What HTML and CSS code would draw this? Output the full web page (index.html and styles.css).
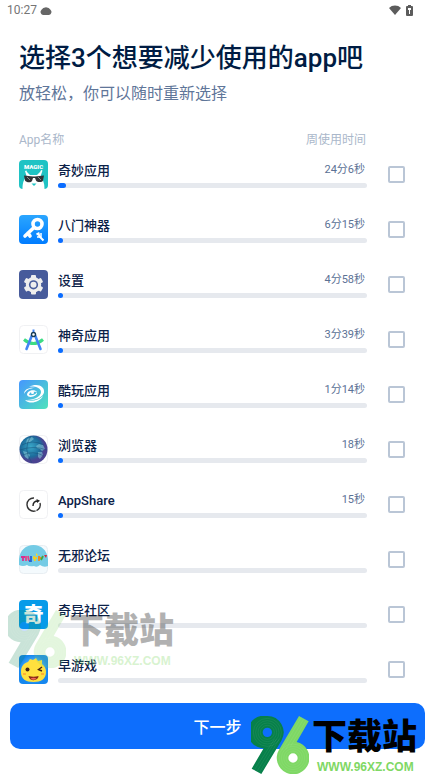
FILE: index.html
```html
<!DOCTYPE html>
<html lang="zh-CN">
<head>
<meta charset="utf-8">
<meta name="viewport" content="width=device-width, initial-scale=1">
<title>选择app</title>
<link rel="stylesheet" href="styles.css">
</head>
<body>
<svg class="defs" aria-hidden="true">
  <defs>
    <linearGradient id="blue" x1="0" y1="0" x2="0" y2="1"><stop offset="0" stop-color="#2ba6ff"/><stop offset="1" stop-color="#007cff"/></linearGradient>
    <linearGradient id="teal" x1="0" y1="0" x2="1" y2="1"><stop offset="0" stop-color="#4596ff"/><stop offset="1" stop-color="#4fe3bc"/></linearGradient>
    <radialGradient id="globe" cx=".4" cy=".4"><stop offset="0" stop-color="#3aa7c8"/><stop offset=".7" stop-color="#1c6d9c"/><stop offset="1" stop-color="#4a4391"/></radialGradient>
    <radialGradient id="sun"><stop offset="0" stop-color="#8fe0ff"/><stop offset="1" stop-color="#1687ee"/></radialGradient>
    <symbol id="logo96" viewBox="0 0 174 174">
      <circle cx="49" cy="49" r="18" fill="#0d6efd"/>
      <circle cx="126" cy="126" r="18" fill="#fff"/>
      <path fill="#07804a" fill-rule="evenodd" d="M49 0a49 49 0 0 1 42 74L31 174 2 158 38 97A49 49 0 1 1 49 0zM49 35a14 14 0 1 0 0 28 14 14 0 0 0 0-28z"/>
      <path fill="#7fd865" fill-rule="evenodd" d="M144 0l29 16-36 62a49 49 0 1 1-53 23zM126 112a14 14 0 1 0 0 28 14 14 0 0 0 0-28z"/>
      <g fill="none" stroke="#fff" stroke-opacity=".12" stroke-width="1.500">
        <circle cx="49" cy="49" r="21"/><circle cx="49" cy="49" r="28"/><circle cx="49" cy="49" r="35"/><circle cx="49" cy="49" r="42"/>
        <circle cx="126" cy="126" r="21"/><circle cx="126" cy="126" r="28"/><circle cx="126" cy="126" r="35"/><circle cx="126" cy="126" r="42"/>
        <path d="M84 70L25 170M77 68L18 166M70 70L10 162M151 5L92 102M158 9L104 100M165 13L118 92"/>
      </g>
    </symbol>
  </defs>
</svg>

<header class="status">
  <time>10:27</time>
  <svg class="cloud" viewBox="0 0 12 9"><path fill="#666" d="M3 9a3 3 0 0 1-1.500-5.200A5 4.500 0 0 1 10.500 3.800 3 3 0 0 1 9 9z"/></svg>
  <svg class="wifi" viewBox="0 0 12 10"><path fill="#5c5c5c" d="M0 3a8.500 8.500 0 0 1 12 0L6 10z"/></svg>
  <svg class="battery" viewBox="0 0 7 11"><path fill="#5c5c5c" d="M2 0h3v1h1a1 1 0 0 1 1 1v8a1 1 0 0 1-1 1H1a1 1 0 0 1-1-1V2a1 1 0 0 1 1-1h1z"/><path fill="#fff" d="M2 3h3v2H4v4H3V5H2z"/></svg>
</header>

<main class="page">
  <h1>选择3个想要减少使用的app吧</h1>
  <p class="sub">放轻松，你可以随时重新选择</p>
  <div class="heads"><span>App名称</span><span>周使用时间</span></div>

  <ul class="apps">
    <li><label class="app">
      <svg class="icon" viewBox="0 0 29 29"><rect width="29" height="29" rx="4" fill="#1fc3c4"/><text x="14.500" y="9" class="magic">MAGIC</text><path fill="#fff" d="M3.500 29c0-7 2-11 4.500-13V12l3 3h7l4-4-1 5c3 3 4.500 7 4.500 13z"/><path fill="#fff" d="M6 11l1.500-.5L9 16H7.500zM22 10l1.500.5-2 6H20z"/><path fill="#303237" d="M5 15.500l9 1h2l9-1-1 5c-.5 2-6 2-7 0l-1-2.500h-2L13 21c-1 2-6 1.500-7-.5z"/><path stroke="#888" d="M8 17l3 3M19 17l3 3"/><path fill="#1fc3c4" d="M12.500 23.500h5L15 26z"/></svg>
      <span class="info"><span class="name">奇妙应用</span><span class="time">24分6秒</span><span class="bar"><span class="fill" style="width:8px"></span></span></span>
      <input type="checkbox"></label></li>
    <li><label class="app">
      <svg class="icon" viewBox="0 0 29 29"><rect width="29" height="29" rx="4" fill="url(#blue)"/><circle cx="18.500" cy="9" r="4.500" fill="none" stroke="#fff" stroke-width="3.600"/><path d="M15 12.500L6 21M9 18l2 3" stroke="#fff" stroke-width="3.600" stroke-linecap="round"/><path d="M17.500 19.500l2-1 1 3 4 4" fill="none" stroke="#fff" stroke-width="2"/><path d="M22 18v4h-4" fill="none" stroke="#fff" stroke-width="1.500"/></svg>
      <span class="info"><span class="name">八门神器</span><span class="time">6分15秒</span><span class="bar"><span class="fill" style="width:5px"></span></span></span>
      <input type="checkbox"></label></li>
    <li><label class="app">
      <svg class="icon" viewBox="0 0 29 29"><rect width="29" height="29" rx="4" fill="#475b9b"/><g fill="#eee"><circle cx="14.500" cy="14.800" r="7.700"/><rect x="12" y="5" width="5" height="19.600" rx="1"/><rect x="12" y="5" width="5" height="19.600" rx="1" transform="rotate(60 14.500 14.800)"/><rect x="12" y="5" width="5" height="19.600" rx="1" transform="rotate(120 14.500 14.800)"/></g><circle cx="14.500" cy="14.800" r="4.600" fill="#475b9b"/><circle cx="14.500" cy="14.800" r="3" fill="#eee"/></svg>
      <span class="info"><span class="name">设置</span><span class="time">4分58秒</span><span class="bar"><span class="fill" style="width:5px"></span></span></span>
      <input type="checkbox"></label></li>
    <li><label class="app">
      <svg class="icon" viewBox="0 0 29 29"><rect x=".5" y=".5" width="28" height="28" rx="4" fill="#fff" stroke="#f0f1f3"/><path d="M5 14.500q9.500 8 19 0" fill="none" stroke="#3ddc84" stroke-width="3"/><path d="M13.500 9L7.500 24M15.500 9l6 15" stroke="#4285f4" stroke-width="2.600" stroke-linecap="round"/><path d="M14.500 4.500v4" stroke="#4285f4" stroke-width="2"/><circle cx="14.500" cy="9.500" r="2" fill="#fff" stroke="#163b58" stroke-width="1.400"/></svg>
      <span class="info"><span class="name">神奇应用</span><span class="time">3分39秒</span><span class="bar"><span class="fill" style="width:5px"></span></span></span>
      <input type="checkbox"></label></li>
    <li><label class="app">
      <svg class="icon" viewBox="0 0 29 29"><rect width="29" height="29" rx="4" fill="url(#teal)"/><g fill="#fff"><path d="M10 6.500c9-4 16 0 15 6-1 5-9 8.500-17 7.500 8 0 14-4 14-8 0-4-5-6-12-5.500z"/><path d="M6 20c7 2 14 0 18-4-3 6-13 9-18 4z"/><path d="M5 14c0-5 6-7 11-6-5 0-9 2-11 6z"/><path d="M8 15c0-5 8-6 10-3-4-1-8 0-8 3 4 1 7-1 8-3 1 4-8 7-10 3z"/><circle cx="13.500" cy="12.500" r="1.500"/></g></svg>
      <span class="info"><span class="name">酷玩应用</span><span class="time">1分14秒</span><span class="bar"><span class="fill" style="width:5px"></span></span></span>
      <input type="checkbox"></label></li>
    <li><label class="app">
      <svg class="icon" viewBox="0 0 29 29"><rect x=".5" y=".5" width="28" height="28" rx="4" fill="#fff" stroke="#f0f1f3"/><circle cx="14.500" cy="14.500" r="14" fill="url(#globe)"/><g fill="#8fd0dc" fill-opacity=".55"><path d="M17 11l3-2 4 1 2 4-3 2-2-2-3-1zM19 17l4 0 1 3-3 4-2-2zM4 16l4 1 3 3-2 4-3-2zM8 4l5-2 2 2-4 3-4 1z"/></g><path d="M3 10q10-6 22 0M1 15q13-5 27 0M4 20q10-5 21 1M12 1q-9 13 1 27" fill="none" stroke="#174f78" stroke-opacity=".5"/></svg>
      <span class="info"><span class="name">浏览器</span><span class="time">18秒</span><span class="bar"><span class="fill" style="width:5px"></span></span></span>
      <input type="checkbox"></label></li>
    <li><label class="app">
      <svg class="icon" viewBox="0 0 29 29"><rect x=".5" y=".5" width="28" height="28" rx="4" fill="#fff" stroke="#f0f1f3"/><path d="M15 8a6.600 6.600 0 1 0 6 5" fill="none" stroke="#333" stroke-width="1.400" stroke-dasharray="23 1 20"/><path d="M14 16c0-3 1-5 5-5" fill="none" stroke="#222" stroke-width="1.400"/><path d="M17.500 9l3.500 1.700-3 2.300z" fill="#222"/></svg>
      <span class="info"><span class="name">AppShare</span><span class="time">15秒</span><span class="bar"><span class="fill" style="width:5px"></span></span></span>
      <input type="checkbox"></label></li>
    <li><label class="app">
      <svg class="icon" viewBox="0 0 29 29"><rect x=".5" y=".5" width="28" height="28" rx="4" fill="#f4fafd" stroke="#e8eef2"/><path d="M0 14C1 5 7 0 14.500 0S28 5 29 14v7q-4 2-8-1-3 3-6 1-5 1-7-1-4 2-8 0z" fill="#74cbe5"/><g stroke-width="1.800" fill="none"><path d="M4 11v5M2 12h4" stroke="#d53091"/><path d="M7 11v5M9 11l1 5" stroke="#e34286"/><path d="M12 11v5h-2" stroke="#2864d7"/><path d="M15 11l1 5M14 13h4" stroke="#f3cf22"/><path d="M20 11v5M19 13h3" stroke="#f08a1c"/><path d="M22 15l2-4" stroke="#43a73b"/></g><path d="M17 8l2 2-2 1z" fill="#ffd628"/><path d="M25 10h3l-1 3z" fill="#d72c3d"/></svg>
      <span class="info"><span class="name">无邪论坛</span><span class="time"></span><span class="bar"></span></span>
      <input type="checkbox"></label></li>
    <li><label class="app">
      <svg class="icon" viewBox="0 0 29 29"><rect width="29" height="29" rx="4" fill="#079be9"/><text x="14.500" y="22" class="qi">奇</text></svg>
      <span class="info"><span class="name">奇异社区</span><span class="time"></span><span class="bar"></span></span>
      <input type="checkbox"></label></li>
    <li><label class="app">
      <svg class="icon" viewBox="0 0 29 29"><rect width="29" height="29" rx="4" fill="url(#sun)"/><path d="M2 17c0-6 3-9 7-10l2-3 3 1 3-2 2 3 4-1v4c3 2 4 5 4 8 0 7-5 10-12.500 10S2 24 2 17z" fill="#ffe03e"/><circle cx="8.500" cy="14.500" r="2" fill="#432318"/><path d="M23 12l-3.500 2.500L23 16" fill="none" stroke="#432318" stroke-width="1.400"/><path d="M9.500 21q5 1.500 10 0c0 5-9 6-10 0z" fill="#8a2a18"/><path d="M11.500 23.500q3-1.500 6 0-3 2.500-6 0z" fill="#f26b56"/><path d="M4 19h3M22 19h3" stroke="#ffae35" stroke-width="2"/></svg>
      <span class="info"><span class="name">早游戏</span><span class="time"></span><span class="bar"></span></span>
      <input type="checkbox"></label></li>
  </ul>
  <div class="mark faded" aria-hidden="true"><svg><use href="#logo96"/></svg><div><b>下载站</b><i>WWW.96XZ.COM</i></div></div>
</main>

<footer class="actions">
  <button type="button">下一步</button>
  <div class="mark solid"><svg aria-hidden="true"><use href="#logo96"/></svg><div><b>下载站</b><i>WWW.96XZ.COM</i></div></div>
</footer>
</body>
</html>
```
FILE: styles.css
```css
* { box-sizing: border-box; }
body {
  margin: 0;
  background: #fff;
  color: #001c43;
  font-family: Roboto, "Noto Sans CJK SC", sans-serif;
}
.defs { position: absolute; width: 0; height: 0; }

.status {
  display: flex;
  align-items: center;
  height: 20px;
  padding: 0 22px 0 7px;
  font-size: 12px;
  color: #757575;
}
.cloud { width: 12px; height: 9px; margin-left: 3px; }
.wifi { width: 12px; height: 10px; margin-left: auto; }
.battery { width: 7px; height: 11px; margin-left: 5px; }

.page { position: relative; padding: 20px 30px 0 19px; }
h1 { margin: 0; font-size: 26px; line-height: 36px; font-weight: 500; }
.sub { margin: 6px 0 0; font-size: 16px; line-height: 24px; color: #5f7699; }
.heads {
  display: flex;
  justify-content: space-between;
  margin: 26px 39px 0 0;
  font-size: 12px;
  line-height: 16px;
  color: #aab7ca;
}

.apps { margin: -1px 0 0; padding: 0; list-style: none; }
.app { display: flex; align-items: center; height: 55px; }
.icon { flex: none; width: 29px; height: 29px; margin-right: 10px; }
.info {
  flex: 1;
  display: grid;
  grid-template-columns: 1fr auto;
  row-gap: 2px;
}
.name { font-size: 13px; line-height: 20px; font-weight: 500; color: #0b2148; }
.time { padding-right: 2px; font-size: 11px; line-height: 18px; color: #5b7195; }
.bar {
  grid-column: 1 / -1;
  height: 5px;
  border-radius: 3px;
  background: #e6e9ee;
}
.fill { display: block; height: 5px; border-radius: 3px; background: #0a6cff; }
input {
  appearance: none;
  flex: none;
  width: 17px;
  height: 17px;
  margin: 0 0 0 21px;
  border: 2px solid #bac6d6;
  border-radius: 2px;
}
input:checked { background: #0d6efd; }
.magic { font: 900 6px Roboto, sans-serif; fill: #fff; text-anchor: middle; }
.qi { font: 900 20px "Noto Sans CJK SC", sans-serif; fill: #fff; text-anchor: middle; }

.actions { position: relative; padding: 6px 10px 26px; }
button {
  display: block;
  width: 100%;
  height: 46px;
  border: 0;
  border-radius: 10px;
  background: #0d6efd;
  color: #fff;
  font: 500 16px Roboto, "Noto Sans CJK SC", sans-serif;
}

.mark { position: absolute; display: flex; gap: 3px; pointer-events: none; }
.mark svg { width: 58px; height: 58px; }
.mark b {
  display: block;
  font-size: 35px;
  line-height: 44px;
  font-weight: 900;
  color: #000;
}
.mark i {
  display: block;
  padding-left: 5px;
  font: bold 12px/14px "Liberation Sans", sans-serif;
  color: #7fd865;
}
.solid { right: 18px; bottom: 1px; }
.faded { left: 8px; bottom: 29px; opacity: .3; }
.faded svg { opacity: .7; }
.faded circle:first-child { fill: none; }
```
